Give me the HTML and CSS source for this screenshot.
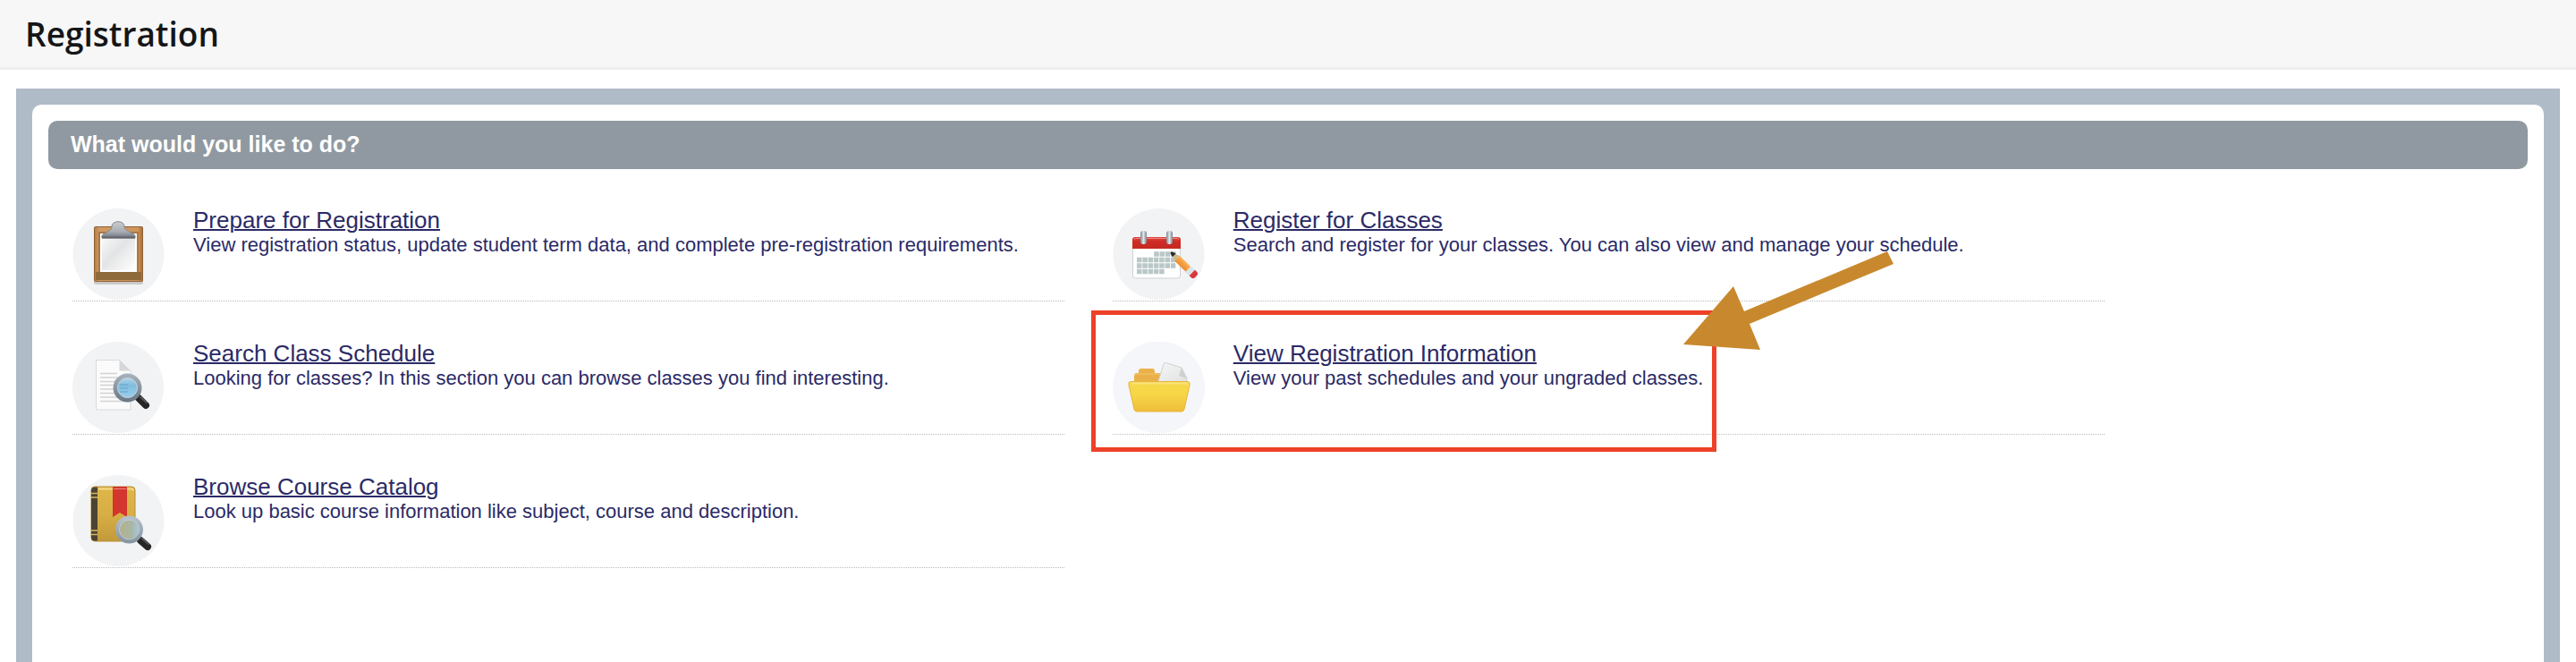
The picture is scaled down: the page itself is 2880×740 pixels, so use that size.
FILE: index.html
```html
<!DOCTYPE html>
<html lang="en">
<head>
    <meta charset="UTF-8">
    <meta name="viewport" content="width=device-width, initial-scale=1.0">
    <title>Registration</title>
    <link rel="stylesheet" href="styles.css">
</head>
<body>
    <header class="page-header">
        <h1>Registration</h1>
    </header>
    <main class="content">
        <section class="panel">
            <h2 class="panel-title">What would you like to do?</h2>
            <ul class="menu">
                <li class="menu-item">
                    <svg class="icon" viewBox="0 0 103 103" aria-hidden="true">
                        <defs>
                            <linearGradient id="wood" x1="0" y1="0" x2="1" y2="0">
                                <stop offset="0" stop-color="#b37a45"/>
                                <stop offset=".1" stop-color="#d09a62"/>
                                <stop offset=".9" stop-color="#cd955c"/>
                                <stop offset="1" stop-color="#a66d39"/>
                            </linearGradient>
                            <linearGradient id="paper" x1="0" y1="0" x2="1" y2="1">
                                <stop offset="0" stop-color="#fafafa"/>
                                <stop offset=".45" stop-color="#e3e4e5"/>
                                <stop offset="1" stop-color="#ffffff"/>
                            </linearGradient>
                            <linearGradient id="clip" x1="0" y1="0" x2="0" y2="1">
                                <stop offset="0" stop-color="#c9ccd0"/>
                                <stop offset=".6" stop-color="#a9adb4"/>
                                <stop offset=".8" stop-color="#8c9098"/>
                                <stop offset="1" stop-color="#6c6f76"/>
                            </linearGradient>
                        </defs>
                        <circle cx="51.5" cy="51" r="51" fill="#f2f3f5"/>
                        <rect x="24" y="79" width="55" height="6" rx="2" fill="#b9b6b3" opacity=".7"/>
                        <rect x="24.5" y="20.5" width="54" height="61" rx="1" fill="url(#wood)" stroke="#8f6034"/>
                        <path d="M29 26h45v50H29z" fill="#ad7643"/>
                        <path d="M26 71h51v9H26z" fill="#8e6a3a"/>
                        <path d="M31 28h41v43H31z" fill="#fff"/>
                        <path d="M33 30h37v39H33z" fill="url(#paper)"/>
                        <path d="M33 33c-1-4 3-5 6-7 4-2 5-3 5-6 0-7 14-7 14 0 0 3 2 4 6 6 3 2 7 3 6 7z" fill="url(#clip)" stroke="#85898f"/>
                        <path d="M33 32.500h37" stroke="#63656b" stroke-width="2"/>
                    </svg>
                    <div class="menu-text">
                        <a href="#">Prepare for Registration</a>
                        <p>View registration status, update student term data, and complete pre-registration requirements.</p>
                    </div>
                </li>
                <li class="menu-item">
                    <svg class="icon" viewBox="0 0 103 103" aria-hidden="true">
                        <defs>
                            <linearGradient id="red" x1="0" y1="0" x2="0" y2="1">
                                <stop offset="0" stop-color="#e0463c"/>
                                <stop offset=".4" stop-color="#cf2b25"/>
                                <stop offset="1" stop-color="#c22a22"/>
                            </linearGradient>
                            <linearGradient id="ring" x1="0" y1="0" x2="1" y2="0">
                                <stop offset="0" stop-color="#7d8790"/>
                                <stop offset=".5" stop-color="#dfe6ec"/>
                                <stop offset="1" stop-color="#76808a"/>
                            </linearGradient>
                            <linearGradient id="pencil" x1="0" y1="0" x2="0" y2="1">
                                <stop offset="0" stop-color="#f9b45a"/>
                                <stop offset="1" stop-color="#ee8a2c"/>
                            </linearGradient>
                        </defs>
                        <circle cx="51.5" cy="51" r="51" fill="#f2f3f5"/>
                        <rect x="22.500" y="34" width="53" height="44" rx="3" fill="#fff" stroke="#cfd0d2"/>
                        <path d="M22 45V35q0-3 3-3h48q3 0 3 3v10z" fill="url(#red)"/>
                        <path d="M24 34.500q1-1 3-1h44q2 0 3 1" fill="none" stroke="#f0877e"/>
                        <rect x="31" y="25" width="7" height="15" rx="3" fill="url(#ring)"/>
                        <rect x="60" y="25" width="7" height="15" rx="3" fill="url(#ring)"/>
                        <g fill="none" stroke="#b9c7c7" stroke-width="5.500" stroke-dasharray="5.500 .8">
                            <path d="M46.200 51h24.400"/>
                            <path d="M27 57.500h43.700"/>
                            <path d="M27 64h43.700"/>
                            <path d="M27 70.500h31"/>
                        </g>
                        <g transform="translate(65 49) rotate(44)">
                            <path d="M0 0l10-4v8z" fill="#cdb88c"/>
                            <path d="M0-1l5-2v5.500L0 1z" fill="#2c2c2c"/>
                            <path d="M10-4h17v8H10z" fill="url(#pencil)"/>
                            <path d="M27-4.500h6v9h-6z" fill="#dbe3e6"/>
                            <path d="M33-4.500h3q3 0 3 3v3q0 3-3 3h-3z" fill="#d63a3e"/>
                        </g>
                    </svg>
                    <div class="menu-text">
                        <a href="#">Register for Classes</a>
                        <p>Search and register for your classes. You can also view and manage your schedule.</p>
                    </div>
                </li>
                <li class="menu-item">
                    <svg class="icon" viewBox="0 0 103 103" aria-hidden="true">
                        <defs>
                            <linearGradient id="glass" x1="0" y1="0" x2="0" y2="1">
                                <stop offset="0" stop-color="#c3dcea"/>
                                <stop offset=".4" stop-color="#80bcdf"/>
                                <stop offset="1" stop-color="#9ed3ee"/>
                            </linearGradient>
                            <linearGradient id="rim" x1="0" y1="0" x2="0" y2="1">
                                <stop offset="0" stop-color="#a4afb9"/>
                                <stop offset="1" stop-color="#6e7a85"/>
                            </linearGradient>
                        </defs>
                        <circle cx="51" cy="51" r="51" fill="#f2f3f5"/>
                        <path d="M26.500 20.500h26L65 33v43H26.500z" fill="#fbfbfb" stroke="#d9dadb"/>
                        <path d="M52.500 20.500L65 32.500H52.500z" fill="#d6d7d8"/>
                        <path d="M31 35.500h19M31 40h32M31 44.500h24M31 48.500h20M31 53h20M31 57.500h20M31 62h20M31 66.500h32" stroke="#d2d3d4" stroke-width="1.500"/>
                        <path d="M74 63l8 8" stroke="#262626" stroke-width="8" stroke-linecap="round"/>
                        <path d="M76 62l7 6" stroke="#555" stroke-width="2" stroke-linecap="round"/>
                        <circle cx="61.500" cy="51.500" r="13.500" fill="url(#glass)" stroke="url(#rim)" stroke-width="5"/>
                        <circle cx="61.500" cy="51.500" r="11" fill="none" stroke="#c3d5e0"/>
                        <path d="M53 48h9M53 52h9M53 56h9" stroke="#66a5cc"/>
                    </svg>
                    <div class="menu-text">
                        <a href="#">Search Class Schedule</a>
                        <p>Looking for classes? In this section you can browse classes you find interesting.</p>
                    </div>
                </li>
                <li class="menu-item highlighted">
                    <svg class="icon" viewBox="0 0 103 103" aria-hidden="true">
                        <defs>
                            <linearGradient id="folder" x1="0" y1="0" x2="0" y2="1">
                                <stop offset="0" stop-color="#f7d84b"/>
                                <stop offset=".4" stop-color="#f7d746"/>
                                <stop offset="1" stop-color="#efbd3b"/>
                            </linearGradient>
                            <linearGradient id="sheet" x1="0" y1="0" x2="1" y2="1">
                                <stop offset="0" stop-color="#f6f6f6"/>
                                <stop offset="1" stop-color="#dfe0e1"/>
                            </linearGradient>
                        </defs>
                        <circle cx="51.5" cy="51" r="51.5" fill="#f5f6f9"/>
                        <path d="M24 46v-8q0-3 3-3h2v-2q0-3 3-3h12q3 0 3 3v2h8v11z" fill="#eab14a"/>
                        <path d="M25 38q0-2 3-2h25" fill="none" stroke="#f2c570"/>
                        <path d="M50.500 46l6.500-21q.5-2 2.500-1.500L77 29l6 12-1 5z" fill="url(#sheet)" stroke="#d0d1d2"/>
                        <path d="M77 29l-3 9 9 3z" fill="#cfd0d1"/>
                        <path d="M20 44.500h63q4 0 3 4l-6 27q-.5 2.500-3 2.500H27q-2.500 0-3-2.500l-6-27q-1-4 2-4z" fill="url(#folder)" stroke="#e8b53d"/>
                        <path d="M21 46.500h61q2 0 2 2" fill="none" stroke="#fae27c" stroke-width="2"/>
                    </svg>
                    <div class="menu-text">
                        <a href="#">View Registration Information</a>
                        <p>View your past schedules and your ungraded classes.</p>
                    </div>
                    <span class="highlight-box"></span>
                    <svg class="arrow" viewBox="0 0 236 112" aria-hidden="true">
                        <path d="M0 105L56 40l12 28L228 1l7 14L74 82l12 29z" fill="#c8892e"/>
                    </svg>
                </li>
                <li class="menu-item">
                    <svg class="icon" viewBox="0 0 103 103" aria-hidden="true">
                        <defs>
                            <linearGradient id="cover" x1="0" y1="0" x2="0" y2="1">
                                <stop offset="0" stop-color="#dfb748"/>
                                <stop offset=".5" stop-color="#d8ae45"/>
                                <stop offset="1" stop-color="#c39a3b"/>
                            </linearGradient>
                            <linearGradient id="lens" x1="0" y1="0" x2="1" y2="0">
                                <stop offset="0" stop-color="#b7b083"/>
                                <stop offset=".6" stop-color="#a9b6a5"/>
                                <stop offset="1" stop-color="#a3cdf0"/>
                            </linearGradient>
                            <linearGradient id="steel" x1="0" y1="0" x2="0" y2="1">
                                <stop offset="0" stop-color="#b5c0ca"/>
                                <stop offset="1" stop-color="#8795a3"/>
                            </linearGradient>
                        </defs>
                        <circle cx="51.5" cy="51" r="51" fill="#f2f3f5"/>
                        <rect x="21" y="13" width="49" height="61" rx="4" fill="url(#cover)" stroke="#b58f38"/>
                        <path d="M29 15.500h37q2 0 2 2" fill="none" stroke="#f3d98a" stroke-width="2"/>
                        <path d="M28 13.500v60h-3q-4 0-4-4v-52q0-4 4-4z" fill="#4a4433"/>
                        <path d="M21 20.500h7M21 25h7M21 62h7M21 66.500h7" stroke="#d8b55c" stroke-width="1.500"/>
                        <path d="M45 13h16v34l-8-5-8 5z" fill="#d3352f"/>
                        <path d="M46 15.500h14" stroke="#ee8c7e"/>
                        <path d="M76 73l8 7" stroke="#262626" stroke-width="8" stroke-linecap="round"/>
                        <path d="M78 71l7 6" stroke="#555" stroke-width="2" stroke-linecap="round"/>
                        <circle cx="63.500" cy="61" r="13" fill="url(#lens)" stroke="url(#steel)" stroke-width="5"/>
                        <circle cx="63.500" cy="61" r="11" fill="none" stroke="#c3ced4"/>
                    </svg>
                    <div class="menu-text">
                        <a href="#">Browse Course Catalog</a>
                        <p>Look up basic course information like subject, course and description.</p>
                    </div>
                </li>
            </ul>
        </section>
    </main>
</body>
</html>
```
FILE: styles.css
```css
* {
    box-sizing: border-box;
}

body {
    display: flex;
    flex-direction: column;
    min-height: 100vh;
    margin: 0;
    background-color: #fff;
    color: #2b2a66;
    font-family: "Liberation Sans", Arial, sans-serif;
}

.page-header {
    padding: 12px 28px;
    background-color: #f7f7f7;
    border-bottom: 3px solid #eee;
}

.page-header h1 {
    margin: 0;
    color: #151617;
    font-family: "Open Sans", sans-serif;
    font-size: 37px;
    font-weight: 600;
    line-height: 51px;
}

.content {
    display: flex;
    flex: 1;
    margin: 21px 18px 0;
    padding: 18px 18px 0;
    background-color: #b0bbc8;
}

.panel {
    flex: 1;
    padding: 18px 18px 0;
    background-color: #fff;
    border-radius: 10px 10px 0 0;
}

.panel-title {
    margin: 0;
    padding: 0 25px 2px;
    background-color: #9099a1;
    border-radius: 10px;
    color: #fff;
    font-size: 25px;
    line-height: 52px;
}

.menu {
    display: grid;
    grid-template-columns: 40% 40%;
    gap: 45px 54px;
    margin: 44px -27px 0 27px;
    padding: 0;
    list-style: none;
}

.menu-item {
    display: flex;
    gap: 32px;
    border-bottom: 1px dotted #bbb;
}

.icon {
    flex: none;
    width: 103px;
    height: 103px;
}

.menu-text a {
    display: block;
    width: fit-content;
    color: inherit;
    font-size: 26px;
    line-height: 26px;
    text-decoration: underline;
    text-decoration-thickness: 2px;
}

.menu-text p {
    margin: 0;
    font-size: 22px;
    line-height: 30px;
}

/* callout over the highlighted entry */
.highlighted {
    position: relative;
}

.highlight-box {
    position: absolute;
    top: -35px;
    left: -24px;
    width: 699px;
    height: 158px;
    border: 5px solid #ed4128;
    pointer-events: none;
}

.arrow {
    position: absolute;
    top: -102px;
    left: 638px;
    width: 236px;
    height: 112px;
    pointer-events: none;
}
```
